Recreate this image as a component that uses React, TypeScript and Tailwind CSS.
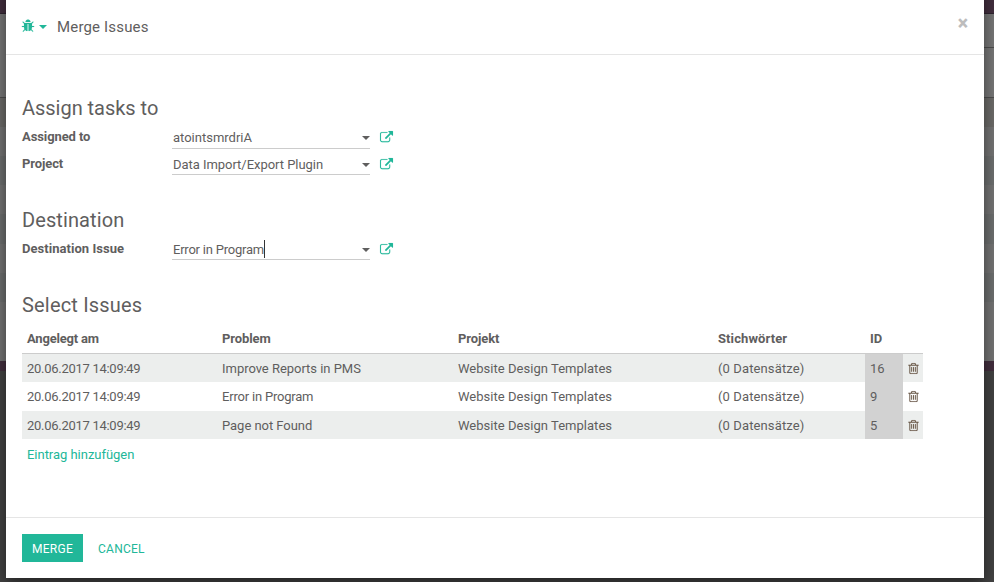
import React from "react";

const BUG =
  "M1696 960q0 26-19 45t-45 19h-224q0 171-67 290l208 209q19 19 19 45t-19 45q-18 19-45 19t-45-19l-198-197q-5 5-15 13t-42 28.5-65 36.5-82 29-97 13v-896h-128v896q-51 0-101.5-13.5t-87-33-66-39-43.5-32.5l-15-14-183 207q-20 21-48 21-24 0-43-16-19-18-20.5-44.5t15.5-46.5l202-227q-58-114-58-274h-224q-26 0-45-19t-19-45 19-45 45-19h224v-294l-173-173q-19-19-19-45t19-45 45-19 45 19l173 173h844l173-173q19-19 45-19t45 19 19 45-19 45l-173 173v294h224q26 0 45 19t19 45zm-480-576h-640q0-133 93.5-226.5t226.5-93.5 226.5 93.5 93.5 226.5z";
const EXTERNAL =
  "M1408 928v320q0 119-84.5 203.5t-203.5 84.5h-832q-119 0-203.5-84.5t-84.5-203.5v-832q0-119 84.5-203.5t203.5-84.5h704q14 0 23 9t9 23v64q0 14-9 23t-23 9h-704q-66 0-113 47t-47 113v832q0 66 47 113t113 47h832q66 0 113-47t47-113v-320q0-14 9-23t23-9h64q14 0 23 9t9 23zm384-864v512q0 26-19 45t-45 19-45-19l-176-176-652 652q-10 10-23 10t-23-10l-114-114q-10-10-10-23t10-23l652-652-176-176q-19-19-19-45t19-45 45-19h512q26 0 45 19t19 45z";
const TRASH =
  "M704 736v576q0 14-9 23t-23 9h-64q-14 0-23-9t-9-23v-576q0-14 9-23t23-9h64q14 0 23 9t9 23zm256 0v576q0 14-9 23t-23 9h-64q-14 0-23-9t-9-23v-576q0-14 9-23t23-9h64q14 0 23 9t9 23zm256 0v576q0 14-9 23t-23 9h-64q-14 0-23-9t-9-23v-576q0-14 9-23t23-9h64q14 0 23 9t9 23zm128 724v-948h-896v948q0 22 7 40.5t14.5 27 10.5 8.5h832q3 0 10.5-8.5t14.5-27 7-40.5zm-672-1076h448l-48-117q-7-9-17-11h-317q-10 2-17 11zm928 32v64q0 14-9 23t-23 9h-96v948q0 83-47 143.5t-113 60.5h-832q-66 0-113-58.5t-47-141.5v-952h-96q-14 0-23-9t-9-23v-64q0-14 9-23t23-9h309l70-167q15-37 54-63t79-26h320q40 0 79 26t54 63l70 167h309q14 0 23 9t9 23z";

function Glyph({ d, className, weight = 0 }: { d: string; className: string; weight?: number }) {
  return (
    <svg
      viewBox="0 0 1792 1792"
      fill="currentColor"
      stroke="currentColor"
      strokeWidth={weight}
      className={`shrink-0 overflow-visible ${className}`}
    >
      <path d={d} />
    </svg>
  );
}

function Caret({ className }: { className: string }) {
  return (
    <svg viewBox="0 0 8 4" fill="currentColor" className={className}>
      <path d="M0 0h8L4 4z" />
    </svg>
  );
}

function Field({
  label,
  value,
  className,
  labelStyle = "",
  valueStyle = "",
  boxStyle = "h-[22px]",
  caret = false,
}: {
  label: string;
  value: string;
  className: string;
  labelStyle?: string;
  valueStyle?: string;
  boxStyle?: string;
  caret?: boolean;
}) {
  return (
    <div className={`flex items-start ${className}`}>
      <label className={`w-[150px] text-[13px] leading-[20px] font-bold ${labelStyle}`}>{label}</label>
      <div className={`flex w-[198px] items-start border-b border-[#cccccc] pl-px ${boxStyle}`}>
        <span className={`pt-px text-[13px] leading-[20px] ${valueStyle}`}>{value}</span>
        {caret && <span className="mt-px h-[18px] w-px bg-[#333333]" />}
        <Caret className="mt-[9px] ml-auto h-1 w-2" />
      </div>
      <Glyph d={EXTERNAL} weight={15} className="mt-[4px] ml-[10px] size-[13px] text-[#21b799]" />
    </div>
  );
}

function Backdrop() {
  return (
    <div className="grid grid-cols-2">
      <BackdropHalf rule="bg-[#787878]" />
      <BackdropHalf rule="bg-[#4e4e4e]" />
    </div>
  );
}

function BackdropHalf({ rule }: { rule: string }) {
  return (
    <div className="flex flex-col">
      <div className="h-[13px] bg-[#432f3f]" />
      <div className="h-px bg-[#302430]" />
      <div className="h-[33px] bg-[#787878]" />
      <div className={`h-px ${rule}`} />
      <div className="h-[49px] bg-[#787878]" />
      <div className="h-px bg-[#4e4e4e]" />
      <div className="h-[29px] bg-[#6d6c6a]" />
      <div className="h-[29px] bg-[#757575]" />
      <div className="h-[29px] bg-[#6e7070]" />
      <div className="h-[29px] bg-[#757575]" />
      <div className="h-[30px] bg-[#6e7070]" />
      <div className="h-[29px] bg-[#757575]" />
      <div className="h-[29px] bg-[#6e7070]" />
      <div className="h-[30px] bg-[#757575]" />
      <div className="h-[29px] bg-[#757575]" />
      <div className="h-[10px] bg-[#432f3f]" />
      <div className="flex-1 bg-[#434343]" />
    </div>
  );
}

const rows = [
  { problem: "Improve Reports in PMS", spacing: "tracking-[-0.03px]", id: "16", style: "h-[28px] bg-[#eceeed]" },
  { problem: "Error in Program", spacing: "tracking-[-0.2px]", id: "9", style: "h-[29px]" },
  { problem: "Page not Found", spacing: "tracking-[-0.04px]", id: "5", style: "h-[28px] bg-[#eceeed]" },
];

const COLS = "grid grid-cols-[195px_236px_260px_152px_38px_20px] grid-rows-[100%]";

export default function App() {
  return (
    <div className="relative grid h-[582px] w-[994px] grid-cols-1 overflow-hidden font-['Roboto','Liberation_Sans',sans-serif] text-[#5f5e5e]">
      <Backdrop />
      <main className="absolute top-[-20px] left-[6px] flex h-[598px] w-[978px] flex-col bg-white pt-5 shadow-[0_5px_15px_rgba(0,0,0,0.5)]">
        <header className="flex h-[55px] items-center border-b border-[#e5e5e5] pr-4 pl-4">
          <Glyph d={BUG} weight={15} className="mb-[2px] -ml-px size-[14px] text-[#21b799]" />
          <Caret className="ml-1 h-1 w-2 text-[#21b799]" />
          <h1 className="ml-[10px] text-[15px] leading-5 tracking-[0.17px]">Merge Issues</h1>
          <button className="mb-[6px] ml-auto text-[19.5px] leading-5 font-black text-[#bdbdbd]">×</button>
        </header>

        <div className="h-[462px] pt-[42px] pl-4">
          <h2 className="h-[30px] text-[20px] leading-[22px] tracking-[-0.03px]">Assign tasks to</h2>
          <Field
            label="Assigned to"
            labelStyle="tracking-[-0.1px]"
            value="atointsmrdriA"
            className="h-[27px]"
          />
          <Field
            label="Project"
            labelStyle="tracking-[-0.1px]"
            value="Data Import/Export Plugin"
            valueStyle="tracking-[-0.04px]"
            boxStyle="h-[21px]"
            className="h-[55px]"
          />
          <h2 className="h-[30px] text-[20px] leading-[22px] tracking-[0.1px]">Destination</h2>
          <Field
            label="Destination Issue"
            labelStyle="tracking-[0.04px]"
            value="Error in Program"
            valueStyle="tracking-[-0.22px]"
            boxStyle="h-[21px]"
            className="h-[55px]"
            caret
          />
          <h2 className="h-[30px] text-[20px] leading-[22px] tracking-[0.18px]">Select Issues</h2>

          <div className="w-[901px] text-[13px] leading-[30px]">
            <div className={`${COLS} h-[30px] border-b border-[#cccccc] font-bold`}>
              <span className="pl-[5px] tracking-[-0.2px]">Angelegt am</span>
              <span className="pl-[5px] tracking-[-0.1px]">Problem</span>
              <span className="pl-[5px] tracking-[-0.1px]">Projekt</span>
              <span className="pl-[5px] tracking-[0.1px]">Stichwörter</span>
              <span className="pl-[5px]">ID</span>
              <span />
            </div>
            {rows.map((r) => (
              <div key={r.id} className={`${COLS} ${r.style}`}>
                <span className="pl-[5px] tracking-[-0.28px]">20.06.2017 14:09:49</span>
                <span className={`pl-[5px] ${r.spacing}`}>{r.problem}</span>
                <span className="pl-[5px] tracking-[0.03px]">Website Design Templates</span>
                <span className="pl-[5px] tracking-[0.12px]">(0 Datensätze)</span>
                <span className="bg-[#d2d2d2] pl-[5px]">{r.id}</span>
                <span className="flex items-start pt-[8px] pl-[3.5px]">
                  <Glyph d={TRASH} weight={10} className="size-[13px] text-[#6b5a49]" />
                </span>
              </div>
            ))}
            <a className="block pl-[5px] leading-[32px] tracking-[-0.03px] text-[#21b799]">Eintrag hinzufügen</a>
          </div>
        </div>

        <footer className="flex flex-1 items-start border-t border-[#e5e5e5] pt-4 pl-4">
          <button className="h-[28px] w-[61px] bg-[#21b799] text-[12px] leading-[30px] tracking-[0.3px] text-white">
            MERGE
          </button>
          <button className="ml-[15px] h-[28px] text-[12px] leading-[30px] tracking-[0.25px] text-[#21b799]">
            CANCEL
          </button>
        </footer>
      </main>
    </div>
  );
}
